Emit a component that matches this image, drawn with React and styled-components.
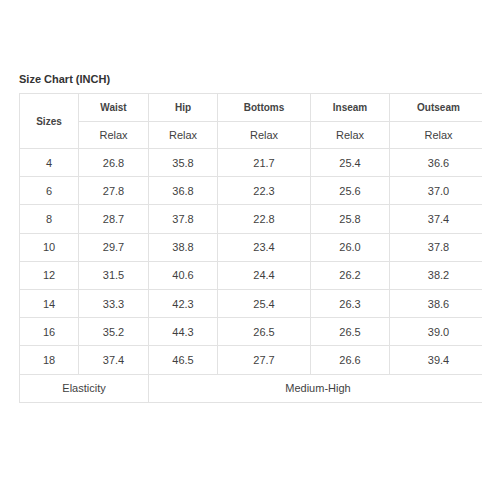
import React from "react";
import styled, { createGlobalStyle } from "styled-components";

const Global = createGlobalStyle`
  html, body { margin: 0; padding: 0; background: #ffffff; overflow: hidden; }
  body { font-family: "Liberation Sans", Arial, sans-serif; }
`;

const Page = styled.div`
  width: 482px;
  height: 482px;
  padding: 72px 0 0 19px;
  box-sizing: border-box;
  overflow: hidden;
`;

const Title = styled.div`
  font-size: 11px;
  line-height: 14px;
  font-weight: bold;
  color: #333333;
  margin-bottom: 7px;
`;

const Table = styled.table`
  border-collapse: collapse;
  table-layout: fixed;
  width: 468px;
  color: #3a3a3a;
`;

const HeadRow = styled.tr`
  height: ${(p) => p.$h}px;
`;

const BodyRow = styled.tr`
  height: 28.2px;
`;

const Th = styled.th`
  border: 1px solid #e2e2e2;
  font-size: 10px;
  font-weight: bold;
  color: #444444;
  text-align: center;
  padding: 0;
`;

const Td = styled.td`
  border: 1px solid #e2e2e2;
  font-size: 11px;
  font-weight: normal;
  color: #3f3f3f;
  text-align: center;
  padding: 0;
`;

const cols = ["Waist", "Hip", "Bottoms", "Inseam", "Outseam"];
const widths = [59, 70, 69, 93, 79, 98];
const rows = [
  ["4", "26.8", "35.8", "21.7", "25.4", "36.6"],
  ["6", "27.8", "36.8", "22.3", "25.6", "37.0"],
  ["8", "28.7", "37.8", "22.8", "25.8", "37.4"],
  ["10", "29.7", "38.8", "23.4", "26.0", "37.8"],
  ["12", "31.5", "40.6", "24.4", "26.2", "38.2"],
  ["14", "33.3", "42.3", "25.4", "26.3", "38.6"],
  ["16", "35.2", "44.3", "26.5", "26.5", "39.0"],
  ["18", "37.4", "46.5", "27.7", "26.6", "39.4"],
];

export default function App() {
  return (
    <Page>
      <Global />
      <Title>Size Chart (INCH)</Title>
      <Table>
        <colgroup>
          {widths.map((w, i) => (
            <col key={i} style={{ width: w }} />
          ))}
        </colgroup>
        <thead>
          <HeadRow $h={27.5}>
            <Th rowSpan={2}>Sizes</Th>
            {cols.map((c) => (
              <Th key={c}>{c}</Th>
            ))}
          </HeadRow>
          <HeadRow $h={27.5}>
            {cols.map((c) => (
              <Td key={c}>Relax</Td>
            ))}
          </HeadRow>
        </thead>
        <tbody>
          {rows.map((r) => (
            <BodyRow key={r[0]}>
              {r.map((v, i) => (
                <Td key={i}>{v}</Td>
              ))}
            </BodyRow>
          ))}
          <BodyRow>
            <Td colSpan={2}>Elasticity</Td>
            <Td colSpan={4}>Medium-High</Td>
          </BodyRow>
        </tbody>
      </Table>
    </Page>
  );
}
